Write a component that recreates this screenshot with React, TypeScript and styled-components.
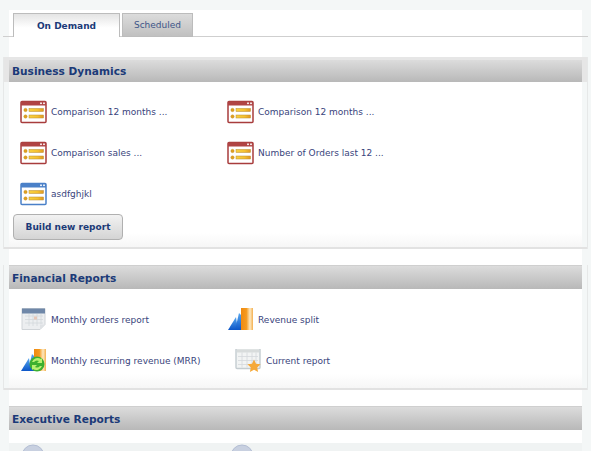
import React from "react";
import styled, { createGlobalStyle } from "styled-components";

const Global = createGlobalStyle`
  html, body { margin: 0; padding: 0; background: #f4f7f7; height: 451px; overflow: hidden; }
  * { box-sizing: border-box; }
`;

const Page = styled.div`
  width: 591px;
  height: 451px;
  overflow: hidden;
  padding-top: 10px;
  font-family: "DejaVu Sans", Verdana, sans-serif;
`;
const Panel = styled.div`
  margin: 0 9px;
  background: #fff;
  height: 441px;
`;
const Tabs = styled.div`
  display: flex;
  align-items: flex-end;
  gap: 2px;
  height: 27px;
  margin: 0 -6px 20px;
  padding-left: 10px;
  border-bottom: 1px solid #cfcfcf;
`;
const Tab = styled.div<{ $active?: boolean }>`
  display: flex;
  align-items: center;
  justify-content: center;
  height: 24px;
  margin-bottom: -1px;
  width: ${(p) => (p.$active ? 107 : 71)}px;
  font-size: 9px;
  font-weight: ${(p) => (p.$active ? 700 : 400)};
  color: ${(p) => (p.$active ? "#1b3a78" : "#3d5588")};
  border: 1px solid #bcbcbc;
  border-width: 1px 1px ${(p) => (p.$active ? 0 : 1)}px 1px;
  background: ${(p) =>
    p.$active
      ? "linear-gradient(#e4e4e4, #fff 60%)"
      : "linear-gradient(#dcdcdc, #c0c0c0)"};
`;
const Section = styled.section<{ $height: number; $gap: number; $rails?: boolean }>`
  height: ${(p) => p.$height}px;
  margin: 0 -6px ${(p) => p.$gap}px;
  border-left: 1px solid ${(p) => (p.$rails ? "#e6e8e8" : "transparent")};
  border-right: 1px solid ${(p) => (p.$rails ? "#e6e8e8" : "transparent")};
`;
const Header = styled.h2<{ $band?: boolean }>`
  margin: 0;
  padding: ${(p) => (p.$band ? "3px 0 0" : "0")};
  background: ${(p) => (p.$band ? "#e6e6e6" : "transparent")};
  margin-inline: ${(p) => (p.$band ? "0" : "5px")};
`;
const HeaderBar = styled.div<{ $band?: boolean }>`
  height: ${(p) => (p.$band ? 22 : 24)}px;
  margin: 0 ${(p) => (p.$band ? 5 : 0)}px;
  display: flex;
  align-items: center;
  padding-left: 3px;
  font-size: 10.6px;
  font-weight: 700;
  color: #1b3a78;
  background: linear-gradient(#dcdcdc, #b8b8b8);
  border-top: ${(p) => (p.$band ? "0" : "1px solid #cfcfcf")};
`;
const Body = styled.div`
  padding: 0 5px;
  border-bottom: 2px solid #e2e2e2;
`;
const Spacer = styled.div<{ $height: number }>`
  height: ${(p) => p.$height}px;
`;
const Inner = styled.div`
  background: linear-gradient(#fff 0, #fff calc(100% - 14px), #f6f6f6 100%);
`;
const Grid = styled.div`
  display: grid;
  grid-template-columns: 207px 207px;
  grid-auto-rows: 24px;
  row-gap: 17px;
  padding-left: 11px;
`;
const Item = styled.a<{ $indent?: number }>`
  display: flex;
  align-items: center;
  height: 24px;
  padding-left: ${(p) => p.$indent ?? 0}px;
  font-size: 9px;
  color: #39447c;
  white-space: nowrap;
`;
const IconSlot = styled.span`
  width: 27px;
  height: 24px;
  margin-right: 4px;
  flex: none;
  display: block;
`;
const BuildButton = styled.button`
  display: block;
  width: 110px;
  height: 26px;
  margin: 8px 0 0 4px;
  padding: 0;
  border: 1px solid #b0b0b0;
  border-radius: 4px;
  background: linear-gradient(#f2f2f2, #d4d4d4);
  font: 700 9px "DejaVu Sans", Verdana, sans-serif;
  color: #1b3a78;
`;
const LastBody = styled.div`
  margin: 0 5px;
  padding: 1px 0 0 12px;
  height: 20px;
  background: #f0f3f3;
  display: grid;
  grid-template-columns: 209px 200px;
`;

const ListIcon = ({ id, edge, title }: { id: string; edge: string; title: string }) => (
  <svg width="27" height="24" viewBox="0 0.5 27 24">
    <defs>
      <linearGradient id={id} x1="0" y1="0" x2="1" y2="0">
        <stop offset="0" stopColor="#f8d040" />
        <stop offset=".6" stopColor="#f4c030" />
        <stop offset="1" stopColor="#e09820" />
      </linearGradient>
    </defs>
    <rect x="1" y="2" width="25" height="21" rx="1" fill="#fff" stroke={edge} strokeWidth="1.5" />
    <rect x="1" y="2" width="25" height="4" fill={title} />
    <rect x="20" y="3" width="2" height="1.6" fill="#fff" opacity=".85" />
    <rect x="23" y="3" width="2" height="1.6" fill="#fff" opacity=".85" />
    <circle cx="5.5" cy="10.5" r="1.7" fill="#e0a020" stroke="#c08a20" strokeWidth=".4" />
    <rect x="9" y="9" width="14.5" height="3" fill={`url(#${id})`} stroke="#b88a30" strokeWidth=".5" />
    <circle cx="5.5" cy="17" r="1.7" fill="#e0a020" stroke="#c08a20" strokeWidth=".4" />
    <rect x="9" y="15.5" width="14.5" height="3" fill={`url(#${id})`} stroke="#b88a30" strokeWidth=".5" />
  </svg>
);

const CalendarIcon = () => (
  <svg width="27" height="24" viewBox="0 0 27 24">
    <path d="M2 0.5h23v16l-5 5h-18z" fill="#eceef0" stroke="#d0d4d8" />
    <path d="M20 21.5v-5h5z" fill="#dfe2e5" />
    <rect x="2" y="0.5" width="23" height="5" fill="#6f87a8" />
    <path d="M5 8h18M5 11.5h18M5 15h18M9 6v12M13 6v12M17 6v12M21 6v10" stroke="#d4d8dc" strokeWidth=".8" />
    <rect x="14" y="8.5" width="3" height="3" fill="#e8c8b8" />
  </svg>
);
const Bars = ({ id }: { id: string }) => (
  <>
    <defs>
      <linearGradient id={id} x1="0" y1="0" x2="0" y2="1">
        <stop offset="0" stopColor="#58a8f0" />
        <stop offset="1" stopColor="#0c56c8" />
      </linearGradient>
      <linearGradient id={`${id}o`} x1="0" y1="0" x2="1" y2="0">
        <stop offset="0" stopColor="#f08a10" />
        <stop offset=".45" stopColor="#f49a20" />
        <stop offset=".75" stopColor="#fde8c0" />
        <stop offset="1" stopColor="#f4b050" />
      </linearGradient>
    </defs>
    <rect x="14" y="0" width="12" height="22" fill={`url(#${id}o)`} />
    <path d="M1 22 L9 9 L11 22Z" fill={`url(#${id})`} />
    <path d="M8 22 L12 5 L14 7 L14 22Z" fill={`url(#${id})`} />
  </>
);
const RevenueIcon = () => (
  <svg width="27" height="24" viewBox="0 0 27 24">
    <Bars id="rev" />
  </svg>
);
const MrrIcon = () => (
  <svg width="27" height="24" viewBox="0 0 27 24">
    <Bars id="mrr" />
    <circle cx="17" cy="15" r="7.5" fill="#3cb030" />
    <path d="M12 13a6 6 0 0 1 9-3l1-1v5h-5l2-2a4 4 0 0 0-5 1zM22 17a6 6 0 0 1-9 3l-1 1v-5h5l-2 2a4 4 0 0 0 5-1z" fill="#b8f070" />
  </svg>
);
const StarCalendarIcon = () => (
  <svg width="27" height="25" viewBox="0 1.5 27 25">
    <rect x="1" y="1" width="24" height="20" rx="1" fill="#f2f4f4" stroke="#c4ccd0" strokeWidth="1.4" />
    <rect x="2" y="2" width="22" height="3" fill="#d8dcdc" />
    <path d="M3 9h20M3 13h20M3 17h20M7 5v15M12 5v15M17 5v15M21 5v15" stroke="#d4d8dc" strokeWidth=".8" />
    <path d="M19 12l2 4.2 4.6.6-3.4 3.1.9 4.6-4.1-2.3-4.1 2.3.9-4.6-3.4-3.1 4.6-.6z" fill="#f5a93a" />
  </svg>
);
const GlobeIcon = () => (
  <svg width="27" height="24" viewBox="0 0 27 24">
    <circle cx="12" cy="12" r="11" fill="#c8d0e0" stroke="#b4bed4" />
  </svg>
);

const Icon = ({ children }: { children: React.ReactNode }) => <IconSlot>{children}</IconSlot>;
const Red = ({ id }: { id: string }) => <ListIcon id={id} edge="#a83c3c" title="#b04444" />;

export default function App() {
  return (
    <Page>
      <Global />
      <Panel>
        <Tabs>
          <Tab $active>On Demand</Tab>
          <Tab>Scheduled</Tab>
        </Tabs>
        <Section $height={192} $gap={16} $rails>
          <Header $band><HeaderBar $band>Business Dynamics</HeaderBar></Header>
          <Body>
            <Inner>
              <Spacer $height={18} />
              <Grid>
                <Item><Icon><Red id="a" /></Icon>Comparison 12 months ...</Item>
                <Item><Icon><Red id="b" /></Icon>Comparison 12 months ...</Item>
                <Item><Icon><Red id="c" /></Icon>Comparison sales ...</Item>
                <Item><Icon><Red id="d" /></Icon>Number of Orders last 12 ...</Item>
                <Item><Icon><ListIcon id="e" edge="#4a80c8" title="#4a80c8" /></Icon>asdfghjkl</Item>
              </Grid>
              <BuildButton>Build new report</BuildButton>
              <Spacer $height={7} />
            </Inner>
          </Body>
        </Section>
        <Section $height={125} $gap={16} $rails>
          <Header><HeaderBar>Financial Reports</HeaderBar></Header>
          <Body>
            <Inner>
              <Spacer $height={19} />
              <Grid>
                <Item><Icon><CalendarIcon /></Icon>Monthly orders report</Item>
                <Item><Icon><RevenueIcon /></Icon>Revenue split</Item>
                <Item><Icon><MrrIcon /></Icon>Monthly recurring revenue (MRR)</Item>
                <Item $indent={8}><Icon><StarCalendarIcon /></Icon>Current report</Item>
              </Grid>
              <Spacer $height={15} />
            </Inner>
          </Body>
        </Section>
        <Section $height={60} $gap={0}>
          <Header><HeaderBar>Executive Reports</HeaderBar></Header>
          <Spacer $height={13} />
          <LastBody>
            <GlobeIcon />
            <GlobeIcon />
          </LastBody>
        </Section>
      </Panel>
    </Page>
  );
}
